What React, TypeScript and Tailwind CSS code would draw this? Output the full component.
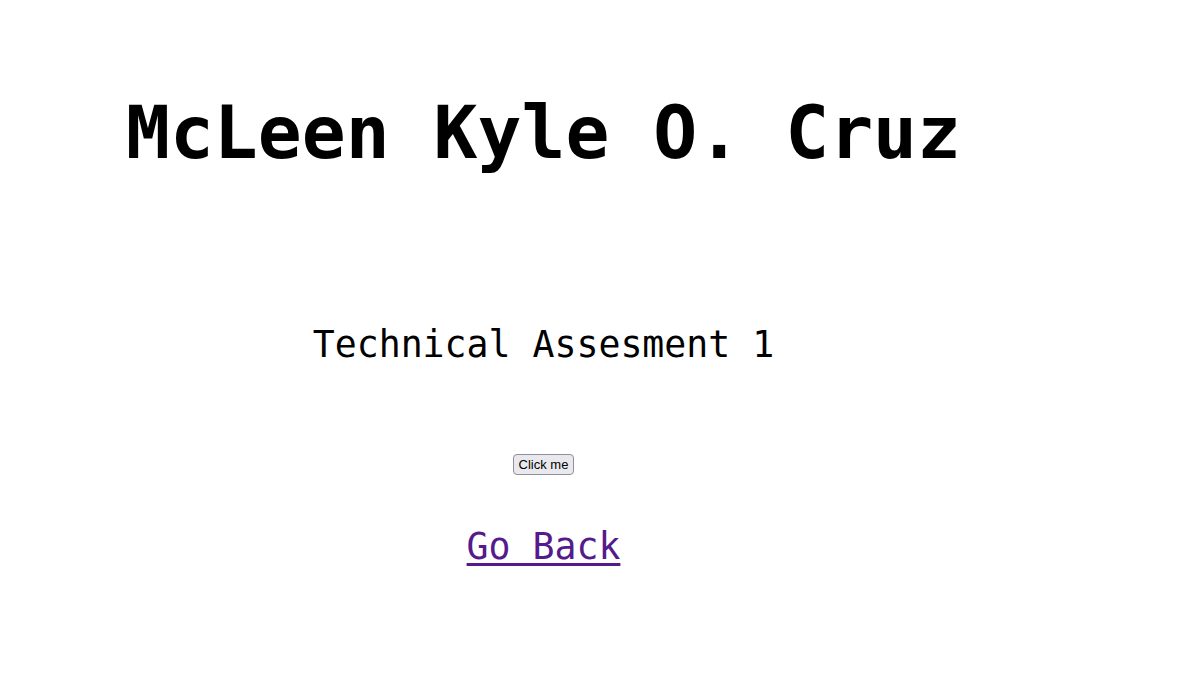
import React from 'react';

const mono = { fontFamily: '"DejaVu Sans Mono", monospace' };

export default function App() {
  return (
    <div className="min-h-[678px] bg-white">
      <div className="w-[1087px] flex flex-col items-center text-center" style={mono}>
        <h1 className="mt-[91px] text-[73px] leading-[84px] font-bold text-black">McLeen Kyle O. Cruz</h1>

        <h2 className="mt-[149px] text-[36.5px] leading-[42px] font-normal text-black">Technical Assesment 1</h2>

        <button
          type="button"
          className="mt-[88px] h-[21px] px-[5px] bg-[#e9e9ed] border border-[#8f8f9d] rounded-[4px] text-[13px] leading-[17px] text-black"
          style={{ fontFamily: '"Liberation Sans", Arial, sans-serif' }}
        >
          Click me
        </button>

        <a href="#" className="mt-[51px] text-[36.5px] leading-[42px] text-[#551a8b] underline underline-offset-[4px] decoration-[3px]">
          Go Back
        </a>
      </div>
    </div>
  );
}
